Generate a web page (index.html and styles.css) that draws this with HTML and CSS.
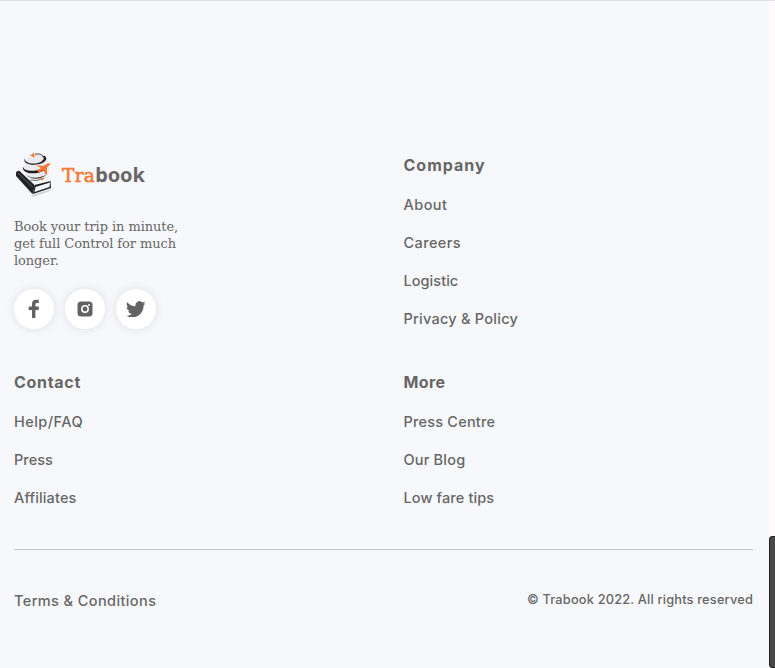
FILE: index.html
```
<!DOCTYPE html>
<html lang="en">
<head>
<meta charset="utf-8">
<title>Trabook</title>
<link rel="stylesheet" href="styles.css">
</head>
<body>
<div class="page">
<footer class="footer">
  <div class="columns">
    <section class="brand">
      <div class="logo">
        <svg width="38" height="46" viewBox="0 0 38 46" aria-hidden="true">
          <path d="M3 25 18 43 37 37 36 39 19 45Z" fill="#d4d4d8"/>
          <ellipse cx="23" cy="15" rx="12.500" ry="14" fill="#ebebee"/>
          <path d="M2 20 5 18.500 20.500 33 19 42 17 40.500 2 24Z" fill="#222324"/>
          <path d="M20.500 33 36.500 29 37 36 19 42Z" fill="#222324"/>
          <path d="M21.500 35 36 30.500 35.500 35 20.500 40Z" fill="#f8f8fa"/>
          <path d="M4 21 18.500 35" stroke="#777" stroke-width=".7"/>
          <path d="M11 6C9 12 24 14 29 8Q31 6 28 4L31 4Q34 7 30 10C23 15 7 13 11 6" fill="#1d1d1e"/>
          <path d="M9 14.500C10 20 21 20 29 16L30 18.500C20 24 7 21 9 14.500" fill="#1d1d1e"/>
          <path d="M12 23Q20 29 34 22Q22 31 12 23" fill="#333"/>
          <path d="M16 28Q23 30 30 26" fill="none" stroke="#555" stroke-width=".8"/>
          <path d="M21 2Q27 1 29 4" fill="none" stroke="#444" stroke-width=".9"/>
          <path d="M15 3 18 2.500 20 0 20 3 23 3.500 20 4 20 6 18 4Z" fill="#f47735"/>
          <path d="M22 13 29 14 34 11.500 37 11.500 33 15.500 33 22 31 22 29.500 18 26 20 25 22 24 19 21 18.500 25 17.500 27 16Z" fill="#f47735"/>
          <path d="m26 26.500 4-1-1.500 3Z" fill="#f47735"/>
        </svg>
        <div class="wordmark"><span class="tra">Tra</span><span class="book">book</span></div>
      </div>
      <p class="tagline">Book your trip in minute,<br>get full Control for much<br>longer.</p>
      <div class="social">
        <a class="round"><svg width="12" height="20" viewBox="0 0 12 20"><path d="M4 19V11H.7V7.500H4V5Q4 .7 8.200.7h2.600v3.400H9Q7.400 4.100 7.400 5.400V7.500h3.400V11H7.400v8Z"/></svg></a>
        <a class="round"><svg width="16" height="16" viewBox="0 0 16 16"><rect x=".5" y=".5" width="15" height="15" rx="3.5"/><circle cx="8" cy="8" r="3.2" fill="none" stroke="#fff" stroke-width="1.5"/><circle cx="12" cy="4" r="1" fill="#fff"/></svg></a>
        <a class="round"><svg width="20" height="16.5" viewBox="0 1.5 24 20"><path d="M23.6 4.1q-1.3.6-2.7.8 1.5-1 2.1-2.7-1.4.9-3.1 1.2A4.9 4.9 0 0 0 11.5 8Q5.300 7.600 1.400 2.900C.1 5.200.8 8 2.900 9.400Q1.700 9.400.7 8.800C.7 11.200 2.300 13.200 4.600 13.700q-1.100.3-2.200.1a4.900 4.900 0 0 0 4.600 3.400A9.900 9.900 0 0 1 0 19.200C9.300 25.200 21.500 18.400 21.200 6.600q1.500-1.100 2.400-2.500Z"/></svg></a>
      </div>
    </section>
    <section class="links">
      <h2 class="h-company">Company</h2>
      <a class="t-about">About</a><a class="t-careers">Careers</a><a class="t-logistic">Logistic</a><a class="t-privacy">Privacy &amp; Policy</a>
    </section>
    <section class="links">
      <h2 class="h-contact">Contact</h2>
      <a class="t-help">Help/FAQ</a><a class="t-press">Press</a><a class="t-affiliates">Affiliates</a>
    </section>
    <section class="links">
      <h2 class="h-more">More</h2>
      <a class="t-centre">Press Centre</a><a class="t-blog">Our Blog</a><a class="t-fare">Low fare tips</a>
    </section>
  </div>
  <div class="bottom"><a class="terms">Terms &amp; Conditions</a><span class="copyright">© Trabook 2022. All rights reserved</span></div>
</footer>
<div class="scroll-track"><div class="scroll-thumb"></div></div>
</div>
</body>
</html>
```
FILE: styles.css
```
* { box-sizing: border-box; }
body { margin: 0; background: #f7f8fc; color: #666; font-family: Inter, "Open Sans", sans-serif; overflow: hidden; }
.page { display: flex; height: 668px; border-top: 1px solid #dfe1e7; }
.footer { width: 769px; padding: 151px 16px 0 14px; }
.columns { display: grid; grid-template-columns: 389.5px 1fr; grid-template-rows: 217px 180px; }
.brand { display: flex; flex-direction: column; align-items: flex-start; }
.logo { display: flex; gap: 10px; height: 46px; align-items: center; }
.wordmark { font-size: 20px; font-weight: 700; line-height: 30px; white-space: nowrap; }
.tra { color: #f47735; font-family: "DejaVu Serif", serif; font-size: 18.5px; font-weight: 400; -webkit-text-stroke: .6px #f47735; letter-spacing: .3px; }
.book { font-family: "Noto Sans", sans-serif; letter-spacing: -.1px; }
.tagline { margin: 20px 0; font: 13px/17px "DejaVu Serif", serif; letter-spacing: -.08px; white-space: nowrap; }
.social { display: flex; gap: 11.5px; }
.round { width: 39.5px; height: 40px; border-radius: 50%; background: #fff; display: flex; align-items: center; justify-content: center; box-shadow: 0 0 10px rgba(0, 0, 0, .1); }
.round svg { fill: #626262; }
.links { display: flex; flex-direction: column; align-items: flex-start; }
.links h2 { margin: 0 0 15px; font-size: 16px; line-height: 27px; font-weight: 700; }
.links a { font-size: 14.5px; font-weight: 500; line-height: 22px; margin-bottom: 16px; white-space: nowrap; }
.links .h-company { letter-spacing: 1px; }
.links .h-contact { letter-spacing: .7px; }
.links .h-more { letter-spacing: .4px; }
.t-about, .t-help { letter-spacing: .45px; }
.t-careers { letter-spacing: .4px; }
.t-logistic { letter-spacing: .05px; }
.t-privacy { letter-spacing: .25px; }
.t-affiliates { letter-spacing: .15px; }
.t-centre, .t-blog { letter-spacing: .2px; }
.t-fare { letter-spacing: .12px; }
.bottom { display: flex; justify-content: space-between; align-items: flex-start; width: 739px; border-top: 1px solid #c6c7cc; padding-top: 40px; font-weight: 500; white-space: nowrap; }
.terms { font-size: 14.5px; line-height: 22px; letter-spacing: .4px; }
.copyright { font-size: 12.8px; line-height: 20px; letter-spacing: .18px; }
.scroll-track { width: 6px; background: #fdfbfb; display: flex; align-items: flex-end; }
.scroll-thumb { width: 12px; height: 132px; flex: none; background: #484848; border: 1px solid #222; border-radius: 3px; }
```
